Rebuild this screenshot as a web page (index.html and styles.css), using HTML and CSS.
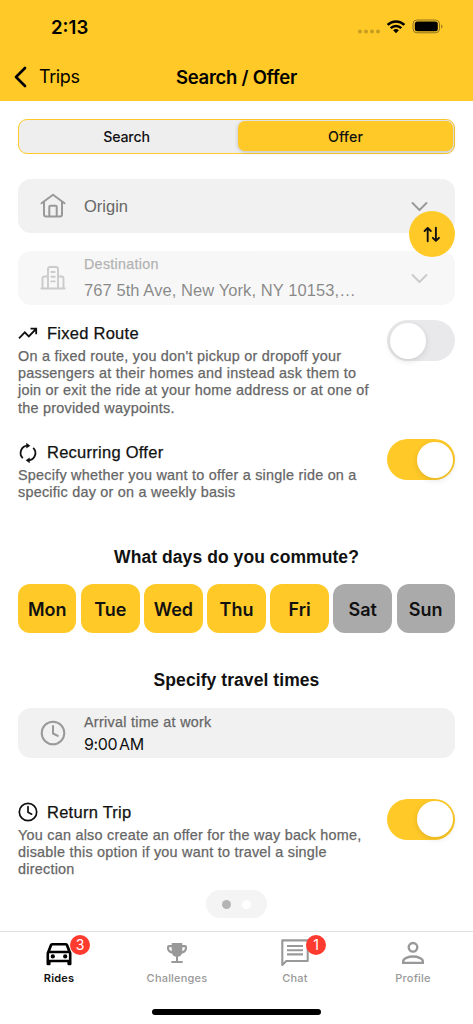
FILE: index.html
```html
<!DOCTYPE html>
<html lang="en">
<head>
  <meta charset="UTF-8" />
  <meta name="viewport" content="width=device-width, initial-scale=1.0"/>
  <title>Search / Offer</title>
  <link rel="stylesheet" href="styles.css">
</head>
<body>
  <div id="container">
    <header class="header">
      <div class="status">
        <span class="clock">2:13</span>
        <svg class="status_icons" width="84" height="16" viewBox="0 0 84 16">
          <g fill="#c79d20">
            <circle cx="2" cy="12.5" r="2"/><circle cx="8" cy="12.5" r="2"/><circle cx="14" cy="12.5" r="2"/><circle cx="20" cy="12.5" r="2"/>
          </g>
          <g fill="none" stroke="#000" stroke-width="2.5">
            <path d="M29.6 5.9a12 12 0 0 1 16.8 0"/>
            <path d="M32.7 9.1a7.5 7.5 0 0 1 10.6 0"/>
          </g>
          <path d="M35.1 11.3a4.2 4.2 0 0 1 5.8 0L38 14.2z"/>
          <rect x="55" y="1" width="26.5" height="12.8" rx="4" fill="none" stroke="#8f731f"/>
          <rect x="56.8" y="2.5" width="23" height="9.8" rx="2.5"/>
          <path d="M83 5.2v4.4q1.6-.7 1.6-2.2T83 5.2z" fill="#a5831f"/>
        </svg>
      </div>
      <div class="nav">
        <a class="back">
          <svg width="14" height="22" viewBox="0 0 14 22"><path d="M12 2 3 11l9 9" fill="none" stroke="#000" stroke-width="2.7" stroke-linecap="round" stroke-linejoin="round"/></svg>
          <span>Trips</span>
        </a>
        <h1>Search / Offer</h1>
      </div>
    </header>

    <main>
      <div class="segment">
        <div class="segment_item">Search</div>
        <div class="segment_item active">Offer</div>
      </div>

      <div class="places">
        <div class="field">
          <svg class="field_icon" width="26" height="26" viewBox="0 0 26 26" fill="none" stroke="#999" stroke-width="2" stroke-linecap="round" stroke-linejoin="round">
            <path d="M1.5 10.3 13 1.7l11.5 8.6M4 8.8V21.5a2 2 0 0 0 2 2h14a2 2 0 0 0 2-2V8.8M9.3 23.5V13.8a1 1 0 0 1 1-1h5.4a1 1 0 0 1 1 1v9.7"/>
          </svg>
          <div class="field_text"><p class="value">Origin</p></div>
          <svg class="chevron" width="18" height="11" viewBox="0 0 18 11"><path d="m2.500 2 7 7 7-7" fill="none" stroke="#999" stroke-width="2" stroke-linecap="round" stroke-linejoin="round"/></svg>
        </div>
        <div class="field disabled">
          <svg class="field_icon" width="26" height="26" viewBox="0 0 26 26" fill="none" stroke="#999" stroke-width="1.900" stroke-linecap="round" stroke-linejoin="round">
            <path d="M1.3 23.5h23.4M8 23.5V4a2 2 0 0 1 2-2h6a2 2 0 0 1 2 2v19.5M8 11.5H4.500a2 2 0 0 0-2 2v10M18 11.5h3.500a2 2 0 0 1 2 2v10M11.3 7h3.400M11.3 11.7h3.400M11.3 16.4h3.400"/>
          </svg>
          <div class="field_text">
            <p class="label">Destination</p>
            <p class="value address">767 5th Ave, New York, NY 10153,…</p>
          </div>
          <svg class="chevron" width="18" height="11" viewBox="0 0 18 11"><path d="m2.5 2 7 7 7-7" fill="none" stroke="#999" stroke-width="2" stroke-linecap="round" stroke-linejoin="round"/></svg>
        </div>
        <button class="swap">
          <svg width="20" height="18" viewBox="0 0 20 18" fill="none" stroke="#111" stroke-width="1.9" stroke-linejoin="round" stroke-linecap="round"><path d="M5.7 16.2V3M2.6 6 5.7 2.9 8.8 6M13.9 2.8v13M10.8 12.8l3.1 3.1 3.1-3.1"/></svg>
        </button>
      </div>

      <section class="option fixed">
        <div class="option_text">
          <h3>
            <svg width="20" height="20" viewBox="0 0 20 20" fill="none" stroke="#111" stroke-width="1.8"><path d="m1 14.3 5.8-5.9 4 4L18 5M12.5 4.6H18.2V10.3"/></svg>
            <span>Fixed Route</span>
          </h3>
          <p>On a fixed route, you don't pickup or dropoff your<br>passengers at their homes and instead ask them to<br>join or exit the ride at your home address or at one of<br>the provided waypoints.</p>
        </div>
        <div class="toggle"><span></span></div>
      </section>

      <section class="option recurring">
        <div class="option_text">
          <h3>
            <svg width="20" height="20" viewBox="0 0 20 20" fill="none" stroke="#111" stroke-width="1.8">
              <path d="M4.8 15.2A7.3 7.3 0 0 1 9.5 2.7M15.2 4.8a7.3 7.3 0 0 1-4.7 12.5"/>
              <path d="m8.3-.2 4 2.9-4 2.9zM11.7 14.4l-4 2.9 4 2.9z" fill="#111" stroke="none"/>
            </svg>
            <span>Recurring Offer</span>
          </h3>
          <p>Specify whether you want to offer a single ride on a<br>specific day or on a weekly basis</p>
        </div>
        <div class="toggle on"><span></span></div>
      </section>

      <h2 class="days_title">What days do you commute?</h2>
      <div class="days">
        <div class="day">Mon</div>
        <div class="day">Tue</div>
        <div class="day">Wed</div>
        <div class="day">Thu</div>
        <div class="day">Fri</div>
        <div class="day off">Sat</div>
        <div class="day off">Sun</div>
      </div>

      <h2 class="times_title">Specify travel times</h2>
      <div class="field time">
        <svg class="field_icon" width="26" height="26" viewBox="0 0 26 26" fill="none" stroke="#999" stroke-width="2" stroke-linecap="round" stroke-linejoin="round"><circle cx="13" cy="13" r="11.3"/><path d="M13 6v7.5l4.8 2.4"/></svg>
        <div class="field_text">
          <p class="label">Arrival time at work</p>
          <p class="value hour">9:00 AM</p>
        </div>
      </div>

      <section class="option return">
        <div class="option_text">
          <h3>
            <svg width="20" height="20" viewBox="0 0 20 20" fill="none" stroke="#111" stroke-width="1.7" stroke-linecap="round"><circle cx="10" cy="10" r="8.7"/><path d="M10 4.7v5.5l3.7 2"/></svg>
            <span>Return Trip</span>
          </h3>
          <p>You can also create an offer for the way back home,<br>disable this option if you want to travel a single<br>direction</p>
        </div>
        <div class="toggle on"><span></span></div>
      </section>

      <div class="pager"><i class="current"></i><i></i></div>
    </main>

    <footer id="footer">
      <div class="tab selected">
        <svg width="28" height="28" viewBox="0 0 28 28">
          <path fill-rule="evenodd" d="M4.8 3.5Q5.4 2 7 2h14q1.6 0 2.2 1.5L26.5 12v11a1.3 1.3 0 0 1-1.3 1.3h-1.5a1.3 1.3 0 0 1-1.3-1.3v-1.7H5.6V23a1.3 1.3 0 0 1-1.3 1.3H2.8A1.3 1.3 0 0 1 1.5 23V12zM7.3 4.5 5.3 9.7h17.4l-2-5.2zM4.1 12.2v6.5h19.8v-6.5z"/>
          <circle cx="7.8" cy="15.4" r="2.1"/><circle cx="20.2" cy="15.4" r="2.1"/>
        </svg>
        <span>Rides</span>
        <b class="badge">3</b>
      </div>
      <div class="tab">
        <svg width="28" height="28" viewBox="0 0 28 28" fill="#999">
          <path fill-rule="evenodd" d="M8.7 2h10.6v2.1H22a2 2 0 0 1 2 2v1.2a5.2 5.2 0 0 1-4.8 5.2 5.4 5.4 0 0 1-4.2 3.2V20h4.6v2.1H8.4V20H13v-4.3a5.4 5.4 0 0 1-4.2-3.2A5.2 5.2 0 0 1 4 7.300V6.1a2 2 0 0 1 2-2h2.700zm0 4.200H6.100v1.100a3.200 3.200 0 0 0 2.600 3zm10.600 0v4.100a3.200 3.200 0 0 0 2.600-3V6.200z"/>
        </svg>
        <span>Challenges</span>
      </div>
      <div class="tab">
        <svg width="28" height="28" viewBox="0 0 28 28" fill="none" stroke="#999" stroke-width="2.1">
          <path d="M1.3-.6h25.4v20.6H5.3l-4 4z" stroke-linejoin="round"/><path d="M6 5H22M6 9.2H22M6 13.4H22"/>
        </svg>
        <span>Chat</span>
        <b class="badge">1</b>
      </div>
      <div class="tab">
        <svg width="28" height="28" viewBox="0 0 28 28" fill="none" stroke="#999" stroke-width="2.4"><circle cx="14" cy="6.3" r="4.3"/><path d="M4.2 21.9v-1.7c0-2.7 5.3-4.7 9.8-4.7s9.8 2 9.8 4.7v1.7z"/></svg>
        <span>Profile</span>
      </div>
    </footer>
    <div class="home_bar"></div>
  </div>
</body>
</html>
```
FILE: styles.css
```css
* {
  box-sizing: border-box;
  margin: 0;
  padding: 0;
}

body {
  font-family: "Liberation Sans", Arial, sans-serif;
  background-color: white;
  color: #111;
}

svg {
  display: block;
  flex: none;
  overflow: visible;
}

#container {
  width: 473px;
  height: 1024px;
  display: flex;
  flex-direction: column;
  overflow: hidden;
}

.header {
  height: 101px;
  background-color: #ffca28;
  color: #000;
  font-family: Inter, sans-serif;
  flex: none;
}

.status {
  height: 54px;
  padding: 0 31px 0 51px;
  display: flex;
  align-items: center;
  justify-content: space-between;
}

.clock {
  font-size: 18.6px;
  font-weight: 600;
  line-height: 24px;
}

.nav {
  height: 45px;
  display: grid;
  grid-template-columns: 1fr auto 1fr;
  align-items: center;
}

.back {
  display: flex;
  align-items: center;
  gap: 12px;
  padding-left: 13px;
  font-size: 18px;
  letter-spacing: -0.4px;
}

.nav h1 {
  font-size: 18.5px;
  font-weight: 600;
  letter-spacing: -0.28px;
}

main {
  flex: 1;
  padding: 17.5px 18px 0;
}

.segment {
  height: 35.5px;
  display: grid;
  grid-template-columns: 218px 1fr;
  padding: 1.5px 1px 2px 0;
  border: 1px solid #ffca28;
  border-radius: 9px;
  background-color: #eee;
  font-family: Inter, sans-serif;
}

.segment_item {
  display: flex;
  align-items: center;
  justify-content: center;
  padding-right: 3px;
  font-size: 14.2px;
  font-weight: 500;
  letter-spacing: -0.15px;
}

.segment_item.active {
  margin-left: 1px;
  padding-right: 0;
  background-color: #ffca28;
  border-radius: 7px;
  box-shadow: 0 1px 4px rgba(0, 0, 0, 0.2);
  letter-spacing: 0.1px;
}

.places {
  position: relative;
  display: flex;
  flex-direction: column;
  gap: 18px;
  margin-top: 25px;
}

.field {
  height: 54px;
  display: flex;
  align-items: center;
  padding: 0 27px 0 22px;
  border-radius: 13px;
  background-color: #f1f1f1;
}

.field.disabled {
  opacity: 0.5;
}

.field_text {
  flex: 1;
  margin-left: 18px;
}

.label {
  font-size: 14.3px;
  line-height: 17px;
  letter-spacing: 0.3px;
  color: #666;
  -webkit-text-stroke: 0.25px #666;
}

.disabled .label {
  margin-top: 1px;
}

.value {
  font-size: 16.5px;
  line-height: 22px;
  color: #666;
}

.address {
  margin-top: 6px;
  letter-spacing: 0.08px;
  color: #111;
}

.time .label {
  margin-top: 3px;
}

.hour {
  margin-top: 2px;
  font-family: Inter, sans-serif;
  font-size: 16px;
  letter-spacing: -0.35px;
  word-spacing: -2.5px;
  color: #111;
}

.swap {
  position: absolute;
  top: 31.5px;
  right: 0;
  width: 46px;
  height: 46px;
  display: flex;
  align-items: center;
  justify-content: center;
  border: none;
  border-radius: 50%;
  background-color: #ffca28;
}

.option {
  display: flex;
  justify-content: space-between;
}

.option h3 {
  display: flex;
  align-items: center;
  gap: 9px;
  height: 22px;
  font-size: 16.5px;
  font-weight: 400;
  letter-spacing: 0.26px;
  -webkit-text-stroke: 0.25px #111;
}

.option p {
  margin-top: 3.5px;
  font-size: 14.4px;
  line-height: 17.2px;
  letter-spacing: 0.24px;
  color: #666;
  white-space: nowrap;
  -webkit-text-stroke: 0.25px #666;
}

.fixed {
  height: 119px;
  margin-top: 17.5px;
}

.recurring {
  height: 104px;
}

.return {
  height: 89px;
  margin-top: 43.5px;
}

.toggle {
  width: 68px;
  height: 41px;
  flex: none;
  margin: -2.5px 0 0 -10px;
  padding: 2.5px;
  border-radius: 21px;
  background-color: #e9e9eb;
}

.toggle span {
  display: block;
  width: 36px;
  height: 36px;
  border-radius: 50%;
  background-color: white;
  box-shadow: 0 2px 6px rgba(0, 0, 0, 0.12);
}

.toggle.on {
  background-color: #ffca28;
}

.toggle.on span {
  margin-left: auto;
}

h2 {
  font-size: 17.5px;
  line-height: 22px;
  letter-spacing: 0.07px;
  text-align: center;
}

.days {
  display: grid;
  grid-template-columns: repeat(7, 1fr);
  gap: 4.6px;
  margin-top: 16.5px;
}

.day {
  height: 49px;
  display: flex;
  align-items: center;
  justify-content: center;
  padding-top: 1px;
  border-radius: 12px;
  background-color: #ffca28;
  font-family: Inter, sans-serif;
  font-size: 18px;
  font-weight: 600;
}

.day.off {
  background-color: #aaa;
}

.times_title {
  margin-top: 35.5px;
}

.time {
  height: 50px;
  margin-top: 17px;
}

.pager {
  width: 61px;
  height: 28px;
  margin: 0 auto;
  display: flex;
  align-items: center;
  justify-content: center;
  gap: 11px;
  border-radius: 14px;
  background-color: #f4f4f4;
}

.pager i {
  width: 9px;
  height: 9px;
  border-radius: 50%;
  background-color: white;
}

.pager .current {
  background-color: #b4b4b4;
}

#footer {
  height: 78px;
  display: grid;
  grid-template-columns: repeat(4, 118px);
  border-top: 1px solid #e0e0e0;
  font-family: Inter, sans-serif;
  flex: none;
}

.tab {
  position: relative;
  display: flex;
  flex-direction: column;
  align-items: center;
  padding-top: 9px;
  color: #999;
  font-size: 11px;
  font-weight: 500;
}

.tab span {
  line-height: 14px;
  margin-top: 1.5px;
  letter-spacing: 0.2px;
}

.tab.selected {
  color: #111;
}

.tab.selected span {
  font-weight: 600;
}

.badge {
  position: absolute;
  top: 3px;
  left: calc(50% + 11px);
  width: 20px;
  height: 20px;
  border-radius: 50%;
  background-color: #ff3b30;
  color: white;
  font-size: 14px;
  font-weight: 400;
  line-height: 20px;
  text-align: center;
}

.home_bar {
  width: 169px;
  height: 6px;
  flex: none;
  margin: 0 auto 9px;
  border-radius: 3px;
  background-color: #000;
}
```
